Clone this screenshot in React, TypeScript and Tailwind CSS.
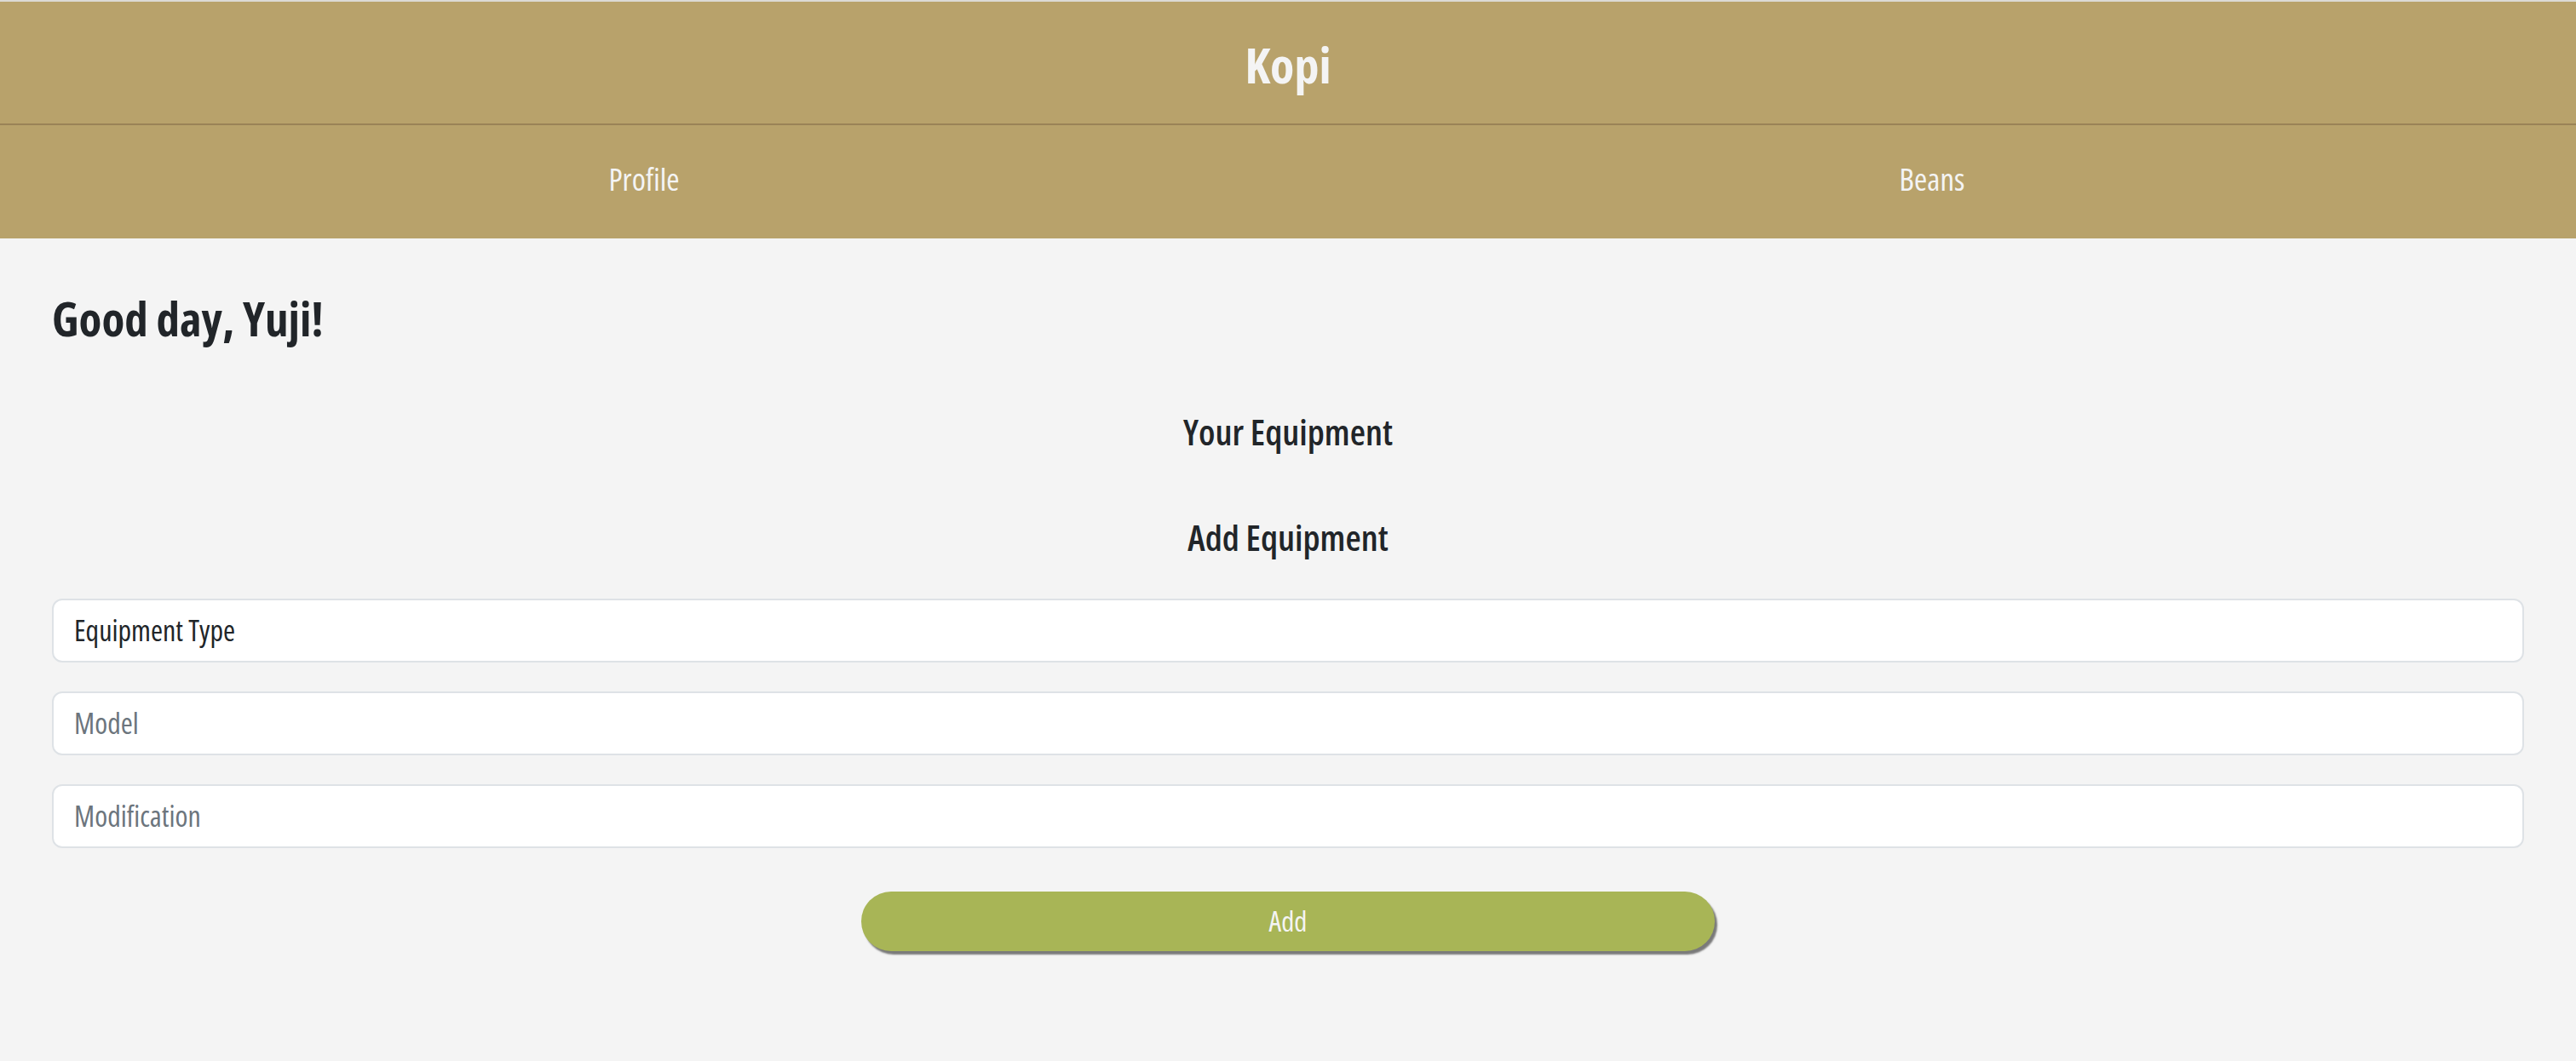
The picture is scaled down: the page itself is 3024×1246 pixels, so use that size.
const font = "font-['Open_Sans',sans-serif] font-stretch-condensed";

const fields = [
  { name: "type", label: "Equipment Type", filled: true },
  { name: "model", label: "Model", filled: false },
  { name: "mod", label: "Modification", filled: false },
];

function Header() {
  return (
    <header className="border-t-2 border-[#dcdad5] bg-[#b8a26b] text-[#f4f4f4]">
      <div className="h-[143px] flex items-center justify-center pt-[4px]">
        <h1 className="text-[58px] font-bold leading-none">Kopi</h1>
      </div>
      <div className="h-[2px] bg-[#9a8357]" />
      <nav className="h-[133px] grid grid-cols-2 items-center text-[37px] font-normal pb-[8px]">
        <a className="text-center">Profile</a>
        <a className="text-center">Beans</a>
      </nav>
    </header>
  );
}

export default function App() {
  return (
    <div className={`min-h-screen bg-[#f4f4f4] ${font}`}>
      <Header />
      <main className="px-[61px] pt-[61px] text-[#212529]">
        <h2 className="text-[55px] font-bold leading-[1.2]">Good day, Yuji!</h2>
        <h3 className="mt-[75px] text-center text-[42px] font-semibold leading-[1.2]">
          Your Equipment
        </h3>
        <h3 className="mt-[74px] text-center text-[42px] font-semibold leading-[1.2]">
          Add Equipment
        </h3>
        <form className="mt-[46px] flex flex-col gap-[34px]">
          {fields.map((f) => (
            <input
              key={f.name}
              name={f.name}
              placeholder={f.label}
              defaultValue={f.filled ? f.label : ""}
              className="h-[75px] w-full rounded-[12px] border-2 border-[#dee2e6] bg-white px-[24px] text-[34px] text-[#212529] placeholder:text-[#6c757d] outline-none"
            />
          ))}
          <div className="flex justify-center pt-[17px]">
            <button
              type="button"
              className="h-[70px] w-[1002px] rounded-full bg-[#a8b556] text-[33px] text-[#f4f4f4] shadow-[3px_4px_2px_#7a7a7a]"
            >
              Add
            </button>
          </div>
        </form>
      </main>
    </div>
  );
}
